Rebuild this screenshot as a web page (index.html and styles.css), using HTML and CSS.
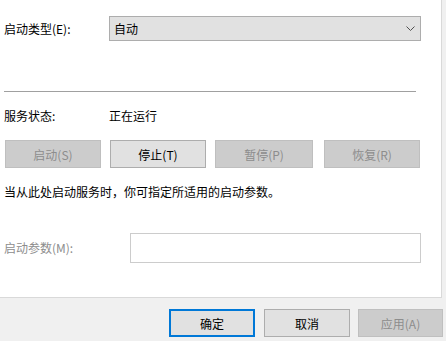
FILE: index.html
```html
<!DOCTYPE html>
<html lang="zh-CN">
<head>
    <meta charset="UTF-8">
    <title>服务属性</title>
    <link rel="stylesheet" href="styles.css">
</head>
<body>

<div class="dialog">
    <div class="panel">
        <div class="row startup-row">
            <span class="label">启动类型(E):</span>
            <div class="select">
                <span class="select-value">自动</span>
                <svg class="chevron" width="9" height="5" viewBox="0 0 9 5">
                    <polyline points="0.5,0.5 4.5,4.5 8.5,0.5" fill="none" stroke="#505050" stroke-width="1"/>
                </svg>
            </div>
        </div>

        <div class="separator"></div>

        <div class="row status-row">
            <span class="label">服务状态:</span>
            <span class="status-value">正在运行</span>
        </div>

        <div class="service-buttons">
            <button class="btn" disabled>启动(S)</button>
            <button class="btn">停止(T)</button>
            <button class="btn btn-wide" disabled>暂停(P)</button>
            <button class="btn btn-last" disabled>恢复(R)</button>
        </div>

        <p class="hint">当从此处启动服务时，你可指定所适用的启动参数。</p>

        <div class="row params-row">
            <span class="label label-params muted">启动参数(M):</span>
            <input class="param-input" type="text">
        </div>
    </div>

    <div class="footer">
        <button class="btn btn-footer btn-default">确定</button>
        <button class="btn btn-footer">取消</button>
        <button class="btn btn-footer btn-apply" disabled>应用(A)</button>
    </div>
</div>

</body>
</html>
```

FILE: styles.css
```css
:root {
    --dialog-bg: #f0f0f0;
    --panel-bg: #ffffff;
    --panel-border: #d9d9d9;
    --text-color: #000000;
    --muted-text: #8d8d8d;
    --button-bg: #e1e1e1;
    --button-border: #adadad;
    --disabled-bg: #cccccc;
    --disabled-border: #bfbfbf;
    --accent: #0078d7;
}

html, body {
    margin: 0;
    height: 100%;
    background-color: var(--dialog-bg);
    font-family: "Microsoft YaHei UI", "Noto Sans CJK SC", sans-serif;
    font-size: 12px;
    color: var(--text-color);
}

.dialog {
    width: 446px;
    height: 341px;
    overflow: hidden;
}

.panel {
    box-sizing: border-box;
    width: 442px;
    height: 298px;
    padding: 16px 0 0 4px;
    background-color: var(--panel-bg);
    border-right: 1px solid var(--panel-border);
    border-bottom: 1px solid var(--panel-border);
}

.row {
    display: flex;
    align-items: center;
    line-height: 16px;
}

.label {
    width: 105px;
    flex-shrink: 0;
}

.select {
    box-sizing: border-box;
    display: flex;
    align-items: center;
    justify-content: space-between;
    width: 312px;
    height: 25px;
    padding: 0 5px 0 4px;
    background-color: var(--button-bg);
    border: 1px solid var(--button-border);
}

.chevron {
    display: block;
}

.separator {
    width: 412px;
    height: 0;
    margin-top: 50px;
    border-top: 1px solid #a0a0a0;
}

.status-row {
    margin-top: 16px;
}

.service-buttons {
    display: flex;
    gap: 9px;
    margin: 16px 0 0 1px;
}

.btn {
    box-sizing: border-box;
    width: 96px;
    height: 28px;
    padding: 0;
    font-family: inherit;
    font-size: 12px;
    color: var(--text-color);
    background-color: var(--button-bg);
    border: 1px solid var(--button-border);
}

.btn:disabled {
    color: var(--muted-text);
    background-color: var(--disabled-bg);
    border-color: var(--disabled-border);
}

.btn-wide {
    width: 98px;
}

.btn-last {
    margin-left: 2px;
}

.hint {
    margin: 16px 0 0 0;
    line-height: 16px;
}

.params-row {
    margin-top: 33px;
}

.label-params {
    width: 126px;
}

.muted {
    color: var(--muted-text);
}

.param-input {
    box-sizing: border-box;
    width: 291px;
    height: 30px;
    margin: 0;
    border: 1px solid #cccccc;
    background-color: #ffffff;
    outline: none;
}

.footer {
    display: flex;
    gap: 9px;
    padding: 11px 0 0 169px;
}

.btn-footer {
    width: 86px;
}

.btn-default {
    border: 2px solid var(--accent);
}

.btn-apply {
    width: 85px;
    margin-left: -1px;
}
```
